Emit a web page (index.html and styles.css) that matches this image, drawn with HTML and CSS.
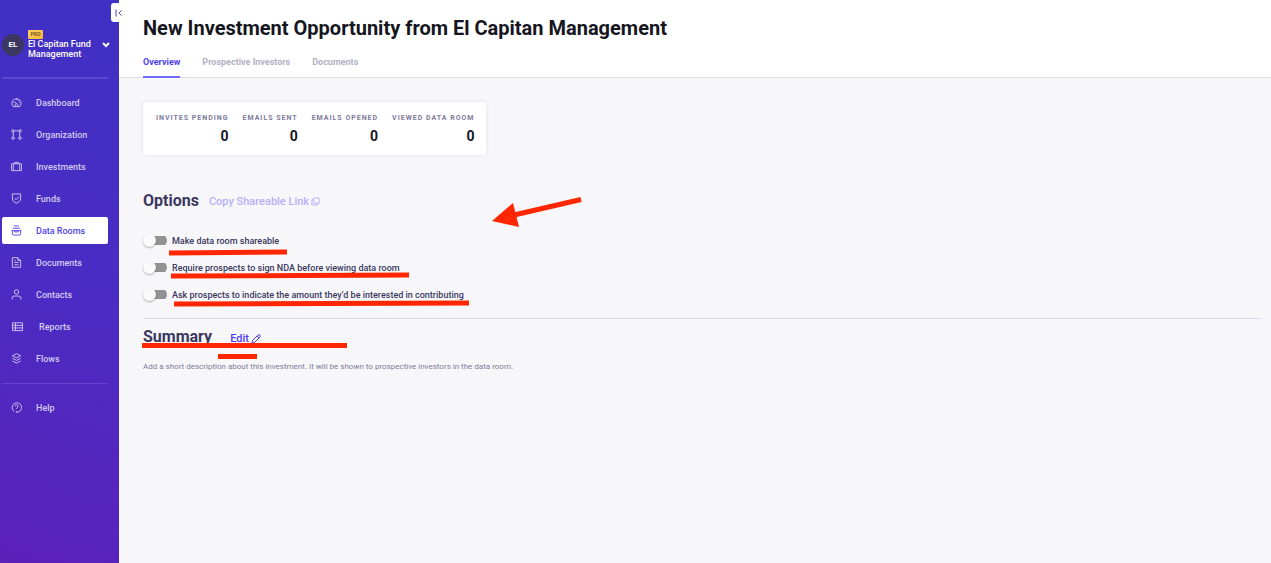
FILE: index.html
```html
<!DOCTYPE html>
<html lang="en">
<head>
    <meta charset="UTF-8">
    <meta name="viewport" content="width=device-width, initial-scale=1.0">
    <title>Data Rooms - El Capitan Fund Management</title>
    <link rel="stylesheet" href="styles.css">
</head>
<body>
    <aside class="sidebar">
        <button class="collapse" aria-label="Collapse menu">
            <svg width="8" height="8" viewBox="0 0 8 8"><path d="M1 0.5v7M6.500 1.500L4 4l2.500 2.500"/></svg>
        </button>
        <button class="account">
            <span class="avatar">EL</span>
            <span class="account-text">
                <span class="badge">PRO</span>
                <span class="account-name">El Capitan Fund Management</span>
            </span>
            <svg class="chevron" width="8" height="6" viewBox="0 0 8 6"><path d="M1 1l3 3 3-3"/></svg>
        </button>
        <nav class="menu">
            <a href="#"><svg viewBox="0 0 12 12"><path d="M2.500 10.500A5 5 0 1 1 9.500 10.500ZM4.500 10.500V8.500q0-1 1.500-1t1.500 1v2M6 7.500L4 5M6 1.500v1.500M2 6h1M9 6h1M8.500 3.500L7.500 4.500"/></svg>Dashboard</a>
            <a href="#"><svg viewBox="0 0 12 12"><circle cx="2" cy="2" r="1.300"/><circle cx="10" cy="2" r="1.300"/><circle cx="2" cy="10" r="1.300"/><circle cx="10" cy="10" r="1.300"/><path d="M3.300 2h5.400M2.500 3.300v5.400M9.500 3.300v5.400M3.300 10h1.200M7.500 10h1.200"/></svg>Organization</a>
            <a href="#"><svg viewBox="0 0 12 12"><rect x="0.500" y="3" width="11" height="7.500" rx="0.500"/><path d="M4 3V1.500h4V3M2.500 3v7.500M9.500 3v7.500"/></svg>Investments</a>
            <a href="#"><svg viewBox="0 0 12 12"><path d="M1.500 1h9v5.500c0 2-2 3.500-4.500 4.500C3.500 10 1.500 8.500 1.500 6.500ZM3.800 5.500l1.700 1.800 3.200-3.300"/></svg>Funds</a>
            <a href="#" class="active" aria-current="page"><svg viewBox="0 0 12 12"><path d="M3.500 1h5M2 3.500h8M0.500 6.200h11M1.500 6.200v3.300q0 1.500 1.500 1.500h6q1.500 0 1.500-1.500V6.200M4 6.200v1.300h4V6.200"/></svg>Data Rooms</a>
            <a href="#"><svg viewBox="0 0 12 12"><path d="M1.500 0.800h6l3 3v7.400h-9ZM7.500 0.800v3h3M3.800 4h1.500M3.800 6h4.400M3.800 8.500h4.400"/></svg>Documents</a>
            <a href="#"><svg viewBox="0 0 12 12"><circle cx="6" cy="3.200" r="2.400"/><path d="M1.200 11.500V10q0-2.300 2.300-2.300h5q2.300 0 2.300 2.300v1.500"/></svg>Contacts</a>
            <a href="#" class="reports"><svg viewBox="0 0 12 12"><path d="M0.500 2h11v8.500h-11ZM3.800 2v8.500M0.500 4.800h11M0.500 7.600h11"/></svg>Reports</a>
            <a href="#"><svg viewBox="0 0 12 12"><path d="M6 0.700l4.500 2.300L6 5.300 1.500 3ZM1.500 5.800L6 8.100l4.500-2.300M1.500 8.700L6 11l4.500-2.300"/></svg>Flows</a>
        </nav>
        <nav class="menu">
            <a href="#"><svg viewBox="0 0 12 12"><path d="M3.500 10.300A5.200 5.200 0 1 1 6 11.200V9.800M4.300 4.700a1.700 1.700 0 1 1 2.500 1.500q-0.800 0.400-0.800 1.300"/></svg>Help</a>
        </nav>
    </aside>

    <main>
        <header>
            <h1>New Investment Opportunity from El Capitan Management</h1>
            <nav class="tabs">
                <a href="#" class="current" aria-current="page">Overview</a>
                <a href="#">Prospective Investors</a>
                <a href="#">Documents</a>
            </nav>
        </header>

        <div class="content">
            <dl class="stats">
                <div><dt>INVITES PENDING</dt><dd>0</dd></div>
                <div><dt>EMAILS SENT</dt><dd>0</dd></div>
                <div><dt>EMAILS OPENED</dt><dd>0</dd></div>
                <div><dt>VIEWED DATA ROOM</dt><dd>0</dd></div>
            </dl>

            <section class="options">
                <div class="section-head">
                    <h2>Options</h2>
                    <button class="copy" disabled>Copy Shareable Link
                        <svg width="9" height="9" viewBox="0 0 10 10"><path d="M3 1h6v6H3ZM3 3H1v6h6V7"/></svg>
                    </button>
                </div>
                <label class="option"><input type="checkbox">Make data room shareable</label>
                <label class="option"><input type="checkbox">Require prospects to sign NDA before viewing data room</label>
                <label class="option"><input type="checkbox">Ask prospects to indicate the amount they’d be interested in contributing</label>
            </section>

            <section class="summary">
                <div class="section-head">
                    <h2>Summary</h2>
                    <button class="edit">Edit
                        <svg width="10" height="10" viewBox="0 0 10 10"><path d="M1 9l0.600-2.600L7 1q1-0.800 1.800 0t0.200 2L3.600 8.400ZM6 2l2 2"/></svg>
                    </button>
                </div>
                <p>Add a short description about this investment. It will be shown to prospective investors in the data room.</p>
            </section>
        </div>
    </main>

    <!-- red markup drawn over the page -->
    <svg class="markup" width="600" height="380" viewBox="0 0 600 380" aria-hidden="true">
        <path d="M169 253L287 252M171 276L409 275M174 304L469 303M142 345.500H347M218 356.500H257M514 215L581 199.500"/>
        <polygon points="492,221 513,203 519,227"/>
    </svg>
</body>
</html>
```

FILE: styles.css
```css
* { box-sizing: border-box; }
body {
    margin: 0;
    min-height: 100vh;
    display: flex;
    position: relative;
    font-family: Roboto, sans-serif;
    font-size: 9px;
    color: #3b3760;
    background: #f7f7fa;
}
button {
    font: inherit;
    color: inherit;
    border: none;
    background: none;
    padding: 0;
    cursor: pointer;
}
a { color: inherit; text-decoration: none; }
svg { fill: none; stroke: currentColor; flex: none; }

/* sidebar */
.sidebar {
    position: relative;
    flex: none;
    width: 119px;
    padding: 27px 11px 0 2px;
    color: #fff;
    background: linear-gradient(200deg, #4030c4, #4a2cc4 50%, #5b21b9);
}
.collapse {
    position: absolute;
    top: 3px;
    right: -4px;
    width: 12px;
    height: 19px;
    padding-left: 4px;
    display: flex;
    align-items: center;
    background: #fff;
    color: #4b3fd0;
    border-radius: 3px;
}
.account {
    display: flex;
    align-items: center;
    width: 100%;
    height: 35px;
    gap: 4px;
    text-align: left;
}
.avatar {
    flex: none;
    width: 22px;
    height: 22px;
    line-height: 22px;
    border-radius: 50%;
    background: #3b3760;
    text-align: center;
    font-size: 8px;
    font-weight: bold;
}
.account-text { flex: 1; }
.badge {
    display: block;
    width: 15px;
    height: 9px;
    line-height: 9px;
    border-radius: 1px;
    background: linear-gradient(135deg, #ffd66b, #fbb52c);
    color: #5a4520;
    font-size: 5px;
    font-weight: 500;
    text-align: center;
}
.account-name {
    display: block;
    font-size: 9px;
    font-weight: 500;
    line-height: 10px;
}
.chevron { stroke-width: 2; margin-right: -2px; }
.menu {
    display: flex;
    flex-direction: column;
    gap: 5px;
    margin-top: 15px;
    padding-top: 10px;
    border-top: 2px solid #5b4ad0;
}
.menu + .menu {
    margin-top: 11px;
    border-top: 1px solid #6544cb;
}
.menu a {
    display: flex;
    align-items: center;
    gap: 14px;
    height: 27px;
    padding-left: 9px;
    border-radius: 2px;
    color: #d3cbf1;
    font-weight: 500;
}
.menu svg { width: 11px; height: 11px; }
.menu a.reports { padding-left: 10px; gap: 16px; }
.menu a.active { background: #fff; color: #5040e8; }

/* header */
main { flex: 1; min-width: 0; }
header {
    height: 78px;
    padding: 14px 24px 0;
    background: #fff;
    border-bottom: 1px solid #dcdce0;
}
h1 {
    margin: 0;
    font-size: 20px;
    line-height: 28px;
    font-weight: bold;
    color: #16161f;
}
.tabs {
    display: flex;
    gap: 22px;
    margin-top: 10px;
    font-weight: bold;
    color: #b4b0c6;
}
.tabs a { height: 26px; line-height: 20px; }
.tabs .current {
    color: #4f3ff0;
    border-bottom: 2px solid #7569f3;
}

/* content */
.content { padding: 24px 10px 24px 24px; }
.stats {
    display: flex;
    width: fit-content;
    gap: 14px;
    margin: 0;
    padding: 12px 12px 10px 13px;
    background: #fff;
    border-radius: 2px;
    box-shadow: 0 0 4px rgba(60, 50, 120, 0.12);
}
.stats dt {
    font-size: 7px;
    line-height: 9px;
    font-weight: bold;
    letter-spacing: 1px;
    color: #7e7a9b;
}
.stats dd {
    margin: 4px 0 0;
    font-size: 14px;
    line-height: 18px;
    font-weight: bold;
    color: #16161f;
    text-align: right;
}
.section-head { display: flex; align-items: center; }
h2 {
    margin: 0;
    font-size: 16px;
    line-height: 20px;
    font-weight: bold;
}
.options {
    margin-top: 36px;
    padding-bottom: 17px;
    border-bottom: 1px solid #dad8ea;
}
.options .section-head { margin-bottom: 23px; }
.copy, .edit {
    display: flex;
    align-items: center;
    gap: 2px;
    font-size: 11px;
    font-weight: 500;
    color: #b9aefb;
    margin-left: 10px;
}
.edit { color: #4f3ff0; margin: 3px 0 0 18px; }
.option {
    display: flex;
    align-items: center;
    gap: 5px;
    width: fit-content;
    height: 13px;
    font-weight: 500;
}
.option + .option { margin-top: 14px; }
.option input {
    appearance: none;
    display: flex;
    align-items: center;
    width: 24px;
    height: 13px;
    margin: 0;
    border-radius: 7px;
    background: linear-gradient(#929292, #929292) right center / 19px 9px no-repeat;
}
.option input::before {
    content: "";
    width: 13px;
    height: 13px;
    border-radius: 50%;
    background: #fafafa;
    box-shadow: 0 1px 2px rgba(0, 0, 0, 0.3);
}
.summary { padding-top: 8px; }
.summary p {
    margin: 15px 0 0;
    font-size: 8px;
    line-height: 10px;
    color: #7e7a9b;
}

.markup {
    position: absolute;
    top: 0;
    left: 0;
    pointer-events: none;
    stroke: #ff2600;
    stroke-width: 5;
}
.markup polygon { fill: #ff2600; stroke: none; }
```
